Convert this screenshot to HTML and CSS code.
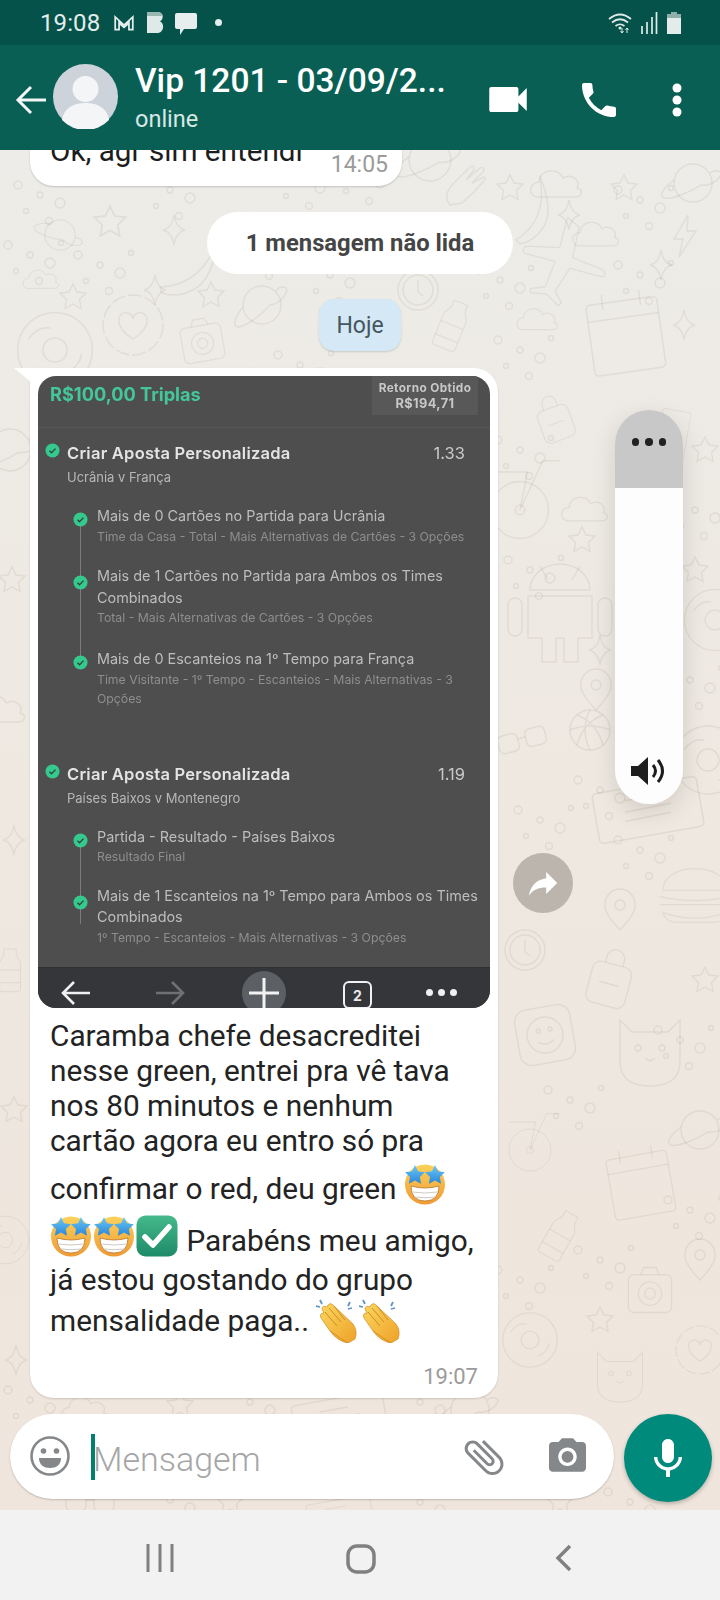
FILE: index.html
```html
<!DOCTYPE html>
<html lang="pt-BR">
<head>
<meta charset="utf-8">
<title>Vip 1201</title>
<link rel="stylesheet" href="styles.css">
</head>
<body>
<svg class="defs" width="0" height="0" aria-hidden="true">
  <defs>
    <linearGradient id="face" x1="0" y1="0" x2="0" y2="1"><stop offset="0" stop-color="#fbd25c"/><stop offset="1" stop-color="#ef9a33"/></linearGradient>
    <linearGradient id="star" x1="0" y1="0" x2="0" y2="1"><stop offset="0" stop-color="#6ac8f7"/><stop offset="1" stop-color="#2a86d8"/></linearGradient>
    <linearGradient id="gbox" x1="0" y1="0" x2="0" y2="1"><stop offset="0" stop-color="#45b98c"/><stop offset="1" stop-color="#1f8a68"/></linearGradient>
    <linearGradient id="hand" x1="0" y1="0" x2="1" y2="1"><stop offset="0" stop-color="#fbd75f"/><stop offset="1" stop-color="#eea128"/></linearGradient>
    <symbol id="starstruck" viewBox="0 0 42 42">
      <circle cx="21" cy="21.500" r="20" fill="url(#face)"/>
      <path d="M7 23q14 4 28 0q0 15-14 15T7 23z" fill="#fff" stroke="#b8742a" stroke-width=".8"/>
      <path d="M8 29q13 2 26 0M11 34q10 1.500 20 0" fill="none" stroke="#cfcac2" stroke-width="1"/>
      <path d="M11 2l3 6.200 6.800 1-4.900 4.800 1.100 6.800L11 17.600 4.900 20.800 6 14 1.100 9.200l6.900-1z" fill="url(#star)"/>
      <path d="M31 2l3 6.200 6.800 1-4.900 4.800 1.100 6.800L31 17.600l-6.100 3.200L26 14l-4.900-4.800 6.900-1z" fill="url(#star)"/>
    </symbol>
    <symbol id="clap" viewBox="0 0 44 44">
      <path d="M4 1l2 4M0 7l4 1M34 3l-2 4M36 9l-4 1" stroke="#5f93c9" stroke-width="1.800" fill="none"/>
      <path d="M18 7l19 18q5 7 2 15l-7 4q-11-2-18-12L5 19q-2-5 3-5l-2-4q0-4 5-2l1-2q3-3 6 1z" fill="url(#hand)" stroke="#d08d22" stroke-width=".7"/>
      <path d="M9 13l12 14M13 9l12 14M18 7l11 14M14 32q8 6 18 12" fill="none" stroke="#d08d22" stroke-width="1"/>
    </symbol>
    <symbol id="okbox" viewBox="0 0 42 42">
      <rect width="41" height="41" x=".5" y=".5" rx="9" fill="url(#gbox)"/>
      <path d="M9 22l8 8L33 12" fill="none" stroke="#fff" stroke-width="5.500" stroke-linecap="round" stroke-linejoin="round"/>
    </symbol>
    <symbol id="tick" viewBox="0 0 16 16">
      <circle cx="8" cy="8" r="7.500" fill="#35c98e"/>
      <path d="M4.800 8.200l2.200 2.200 4.200-4.400" fill="none" stroke="#2c4a40" stroke-width="1.500"/>
    </symbol>
    <g id="d-star"><path d="M0-13l4 8 9 1-6.500 6.500 1.500 9-8-4.500-8 4.500 1.500-9L-13-4l9-1z"/></g>
    <g id="d-spark"><path d="M0-15q2 13 11 15-9 2-11 15-2-13-11-15 9-2 11-15z"/></g>
    <g id="d-planet"><circle r="19"/><path d="M-19-3c-12 9-15 16-10 18 6 2 25-5 37-13C20 4 31-8 27-11c-3-2-7-1-10 1"/></g>
    <g id="d-cloud"><path d="M-24 12c-10 0-10-14 1-15 0-13 20-15 24-4 9-5 18 3 14 10 7 2 5 9-2 9z"/></g>
    <g id="d-heart"><circle r="30" stroke-dasharray="14 3"/><path d="M0 14C-22 0-14-15-5-12c3 1 5 3 5 6 0-3 2-5 5-6 9-3 17 12-5 26z"/></g>
    <g id="d-camera"><rect x="-24" y="-17" width="48" height="42" rx="6"/><path d="M-10-17l3-8h14l3 8"/><circle cy="4" r="13"/><circle cy="4" r="6"/></g>
    <g id="d-bottle"><path d="M-9-30h18v9l6 10v38q0 4-4 4h-22q-4 0-4-4v-38l6-10z"/><path d="M-15 0h30M-15 18h30"/></g>
    <g id="d-cal"><rect x="-34" y="-28" width="68" height="68" rx="4"/><path d="M-34-12h68M-18-36v14M18-36v14"/></g>
    <g id="d-plane"><path d="M-6-50l8 34 36-2c6 2 6 7 0 8L4-4l-4 30 12 9-2 4-18-6-16 6-2-4 14-9-2-30-34 6c-5-1-5-5-2-8l34-14-6-34z"/></g>
    <g id="d-android"><path d="M-30-20a30 26 0 0 1 60 0zM-32-14h64v42h-14v24h-14V28h-8v24h-14V28h-14z"/><path d="M-20-44l8 14M20-44l-8 14"/><rect x="-52" y="-12" width="14" height="38" rx="7"/><rect x="38" y="-12" width="14" height="38" rx="7"/></g>
    <g id="d-burger"><path d="M-40-6c0-36 80-36 80 0zM-44 2q44 10 88 0M-44 12h88M-40 22q40 14 80 0q-2 10-14 12h-52q-12-2-14-12z"/></g>
    <g id="d-donut"><circle r="34"/><circle r="11"/><path d="M-24-10q8-12 20-10M10 20q12-4 14-16"/></g>
    <g id="d-card"><rect x="-46" y="-22" width="92" height="44" rx="4" transform="rotate(-10)"/><path d="M-20 2l40-8M-20-8l28-5M-20 10l40-8"/></g>
    <g id="d-ball"><circle r="20"/><path d="M-20 0q20-8 40 0M0-20q-10 20 0 40M-13-15q20 8 26 30M13-15q-20 8-26 30"/></g>
    <g id="d-bike"><circle r="30"/><circle r="5"/><path d="M0 0L24-52h18M-30-40h38L0 0"/></g>
    <g id="d-hand"><path d="M-14 22q-8-10 4-22l16-16q5-3 4 3l-8 10 14-12q4-2 4 3l-12 12 12-6q3 1 0 4-10 12-22 22z"/></g>
    <g id="d-banana"><path d="M-12 30Q20 10 12-34q12 30 6 46-8 18-26 22z"/></g>
    <g id="d-bolt"><path d="M4-20L-10 4h9l-4 18L12-4H3z"/></g>
    <g id="d-clock"><circle r="20"/><circle r="15"/><path d="M0-10v12l5 4"/></g>
    <g id="d-pin"><path d="M0 20Q-17 2-15-6a15 15 0 0 1 30 0Q17 2 0 20z"/><circle cy="-5" r="5"/></g>
    <g id="d-glasses"><rect x="-24" y="-9" width="20" height="18" rx="5"/><rect x="4" y="-9" width="20" height="18" rx="5"/><path d="M-4-2h8"/></g>
    <g id="d-cat"><path d="M-30-30l12 12h36l12-12v44q-2 22-30 22t-30-22z"/><circle cx="-12" cy="-2" r="3"/><circle cx="12" cy="-2" r="3"/><path d="M-5 8q5 5 10 0"/></g>
    <g id="d-bag"><rect x="-20" y="-16" width="40" height="42" rx="8"/><path d="M-9-16v-6a9 9 0 0 1 18 0v6M-10 4h20"/></g>
    <g id="d-face"><rect x="-28" y="-28" width="56" height="56" rx="12"/><circle r="18"/><circle cx="-6" cy="-5" r="2"/><circle cx="6" cy="-5" r="2"/><path d="M-8 6q8 6 16 0"/></g>
    <g id="d-dots"><circle r="3"/><circle cx="20" cy="8" r="5"/><circle cx="-14" cy="16" r="2.500"/><circle cx="9" cy="26" r="3.500"/><circle cx="-22" cy="-10" r="4"/><circle cx="31" cy="-12" r="2.500"/></g>
  </defs>
</svg>

<div class="screen">
  <header class="topbar">
    <div class="status">
      <span class="clock">19:08</span>
      <svg class="st st-m" viewBox="0 0 20 16"><path d="M2 14V2.500L10 10l8-7.500V14h-3.500V8L10 12 5.500 8v6z" fill="none" stroke="#e3eeec" stroke-width="1.600"/></svg>
      <svg class="st st-b" viewBox="0 0 18 21"><path d="M1 0h10c7 0 7 7 3 9.500 5 2 4 11.500-3 11.500H1z" fill="#dfeae8"/><path d="M1 0h10c4 0 5.500 2 5.800 4H1z" fill="#9ab8b2"/></svg>
      <svg class="st st-c" viewBox="0 0 22 22"><path d="M2 0h18q2 0 2 2v12q0 2-2 2H9l-4 6v-6H2q-2 0-2-2V2q0-2 2-2z" fill="#e6efed"/></svg>
      <span class="dot"></span>
      <span class="spacer"></span>
      <svg class="st st-w" viewBox="0 0 24 20"><g fill="none" stroke="#dfeae8" stroke-width="1.700"><path d="M1 6q11-9 22 0M4 9.500q8-6.500 16 0M7.500 13q4.500-3.500 9 0"/></g><circle cx="12" cy="15" r="1.500" fill="#dfeae8"/><path d="M14 15v5M12.500 18l1.500 2 1.500-2M19 20v-5M17.500 17l1.500-2 1.500 2" stroke="#dfeae8" fill="none"/></svg>
      <svg class="st st-s" viewBox="0 0 18 22"><path d="M2 14v8M7 10v12M12 5v17M16.500 0v22" stroke="#dfeae8" stroke-width="1.700"/></svg>
      <svg class="st st-bat" viewBox="0 0 14 22"><path d="M4 0h6v2h4v20H0V2h4z" fill="#e3ecea"/><path d="M4 0h6v2h4v4H0V2h4z" fill="#8fb0aa"/></svg>
    </div>
    <div class="appbar">
      <svg class="back" viewBox="0 0 32 30"><path d="M31 15H3M16 2L3 15l13 13" fill="none" stroke="#f2f7f6" stroke-width="3"/></svg>
      <svg class="avatar" viewBox="0 0 65 65"><circle cx="32.500" cy="32.500" r="32.500" fill="#cdd3da"/><circle cx="32.500" cy="25" r="13" fill="#f4f5f6"/><path d="M9 56c2-13 13-17 23.500-17S54 43 56 56a32.500 32.500 0 0 1-47 0z" fill="#f4f5f6"/></svg>
      <div class="who">
        <div class="name">Vip 1201 - 03/09/2...</div>
        <div class="online">online</div>
      </div>
      <svg class="act-video" viewBox="3 6 18 12"><path d="M17 10.500V7c0-.55-.45-1-1-1H4c-.55 0-1 .45-1 1v10c0 .55.45 1 1 1h12c.55 0 1-.45 1-1v-3.500l4 4v-11l-4 4z" fill="#fff"/></svg>
      <svg class="act-phone" viewBox="3 3 18 18"><path d="M6.620 10.790c1.440 2.830 3.760 5.140 6.590 6.590l2.200-2.200c.27-.27.67-.36 1.020-.24 1.120.37 2.330.57 3.570.57.55 0 1 .45 1 1V20c0 .55-.45 1-1 1-9.390 0-17-7.610-17-17 0-.55.45-1 1-1h3.500c.55 0 1 .45 1 1 0 1.250.2 2.450.57 3.570.11.35.03.74-.25 1.020l-2.200 2.200z" fill="#fff"/></svg>
      <svg class="act-more" viewBox="0 0 10 34"><circle cx="5" cy="5" r="4.500" fill="#fff"/><circle cx="5" cy="17" r="4.500" fill="#fff"/><circle cx="5" cy="29" r="4.500" fill="#fff"/></svg>
    </div>
  </header>

  <main class="chat">
    <svg class="wall" width="720" height="1360" viewBox="0 0 720 1360" aria-hidden="true">
      <g fill="none" stroke="#6b5f4e" stroke-opacity=".1" stroke-width="1.400">
        <use href="#d-planet" transform="translate(693 33)"/><use href="#d-hand" transform="translate(464 33)"/><use href="#d-star" transform="translate(510 38)"/><use href="#d-cloud" transform="translate(562 35)"/><use href="#d-star" transform="translate(624 38)"/>
        <use href="#d-planet" transform="translate(430 10) scale(1.100)"/>
        <use href="#d-banana" transform="translate(528 60)"/><use href="#d-cloud" transform="translate(601 85) scale(.9)"/><use href="#d-spark" transform="translate(569 65)"/><use href="#d-bolt" transform="translate(684 85)"/>
        <use href="#d-star" transform="translate(110 72) scale(1.200)"/><use href="#d-spark" transform="translate(174 80)"/><use href="#d-planet" transform="translate(60 85) scale(.8) rotate(40)"/>
        <use href="#d-spark" transform="translate(155 140)"/><use href="#d-banana" transform="translate(188 115) rotate(30) scale(1.100)"/>
        <use href="#d-plane" transform="translate(565 120) rotate(25) scale(.9)"/><use href="#d-spark" transform="translate(661 115)"/>
        <use href="#d-cal" transform="translate(625 180) rotate(-8) scale(1.050)"/><use href="#d-clock" transform="translate(418 140)"/><use href="#d-bottle" transform="translate(452 175) rotate(22) scale(.8)"/>
        <use href="#d-camera" transform="translate(202 190) rotate(-10) scale(.85)"/><use href="#d-heart" transform="translate(133 175)"/><use href="#d-planet" transform="translate(262 155) rotate(-15)"/><use href="#d-star" transform="translate(211 145)"/><use href="#d-star" transform="translate(73 147)"/><use href="#d-cloud" transform="translate(542 170) scale(.8)"/><use href="#d-spark" transform="translate(684 175)"/><use href="#d-cloud" transform="translate(45 130) scale(.7)"/>
        <use href="#d-donut" transform="translate(55 200) scale(1.100)"/>
        <use href="#d-dots" transform="translate(40 45)"/><use href="#d-dots" transform="translate(170 40)"/><use href="#d-dots" transform="translate(300 30)"/><use href="#d-dots" transform="translate(360 25)"/><use href="#d-dots" transform="translate(640 50)"/><use href="#d-dots" transform="translate(500 130)"/><use href="#d-dots" transform="translate(640 125)"/><use href="#d-dots" transform="translate(30 105)"/><use href="#d-dots" transform="translate(100 115)"/><use href="#d-dots" transform="translate(260 100)"/><use href="#d-dots" transform="translate(330 125)"/><use href="#d-dots" transform="translate(470 90)"/><use href="#d-dots" transform="translate(300 215)"/><use href="#d-dots" transform="translate(520 200)"/>
        <use href="#d-bag" transform="translate(555 270) rotate(-20) scale(.8)"/><use href="#d-card" transform="translate(672 290) rotate(-70) scale(.65)"/><use href="#d-star" transform="translate(705 300)"/>
        <use href="#d-bike" transform="translate(520 360) scale(.95)"/><use href="#d-cloud" transform="translate(590 360) scale(.9)"/><use href="#d-star" transform="translate(582 390)"/>
        <use href="#d-android" transform="translate(560 460)"/><use href="#d-spark" transform="translate(600 500)"/><use href="#d-pin" transform="translate(596 540)"/><use href="#d-star" transform="translate(695 420)"/><use href="#d-donut" transform="translate(715 470) scale(.9)"/>
        <use href="#d-glasses" transform="translate(522 590) rotate(-15)"/><use href="#d-ball" transform="translate(590 580)"/><use href="#d-donut" transform="translate(708 610)"/><use href="#d-card" transform="translate(648 660) scale(1.150)"/>
        <use href="#d-burger" transform="translate(695 745) scale(.8)"/><use href="#d-pin" transform="translate(620 760)"/>
        <use href="#d-dots" transform="translate(520 300)"/><use href="#d-dots" transform="translate(695 360)"/><use href="#d-dots" transform="translate(530 420)"/><use href="#d-dots" transform="translate(600 640)"/><use href="#d-dots" transform="translate(540 670)"/><use href="#d-dots" transform="translate(690 530)"/><use href="#d-dots" transform="translate(640 700)"/>
        <use href="#d-bag" transform="translate(610 830) rotate(15)"/><use href="#d-face" transform="translate(545 885) rotate(-10)"/><use href="#d-cat" transform="translate(650 900)"/><use href="#d-star" transform="translate(705 830)"/><use href="#d-clock" transform="translate(525 800)"/>
        <use href="#d-bike" transform="translate(530 1000) scale(.7)"/><use href="#d-cal" transform="translate(640 1030) rotate(-10) scale(.9)"/><use href="#d-planet" transform="translate(700 980)"/><use href="#d-bottle" transform="translate(560 1085) rotate(30) scale(.8)"/>
        <use href="#d-camera" transform="translate(650 1140) scale(.9)"/><use href="#d-star" transform="translate(600 1170)"/><use href="#d-donut" transform="translate(530 1190) scale(.8)"/><use href="#d-cat" transform="translate(620 1225) scale(.75)"/><use href="#d-pin" transform="translate(700 1110)"/><use href="#d-heart" transform="translate(700 1200) scale(.8)"/>
        <use href="#d-dots" transform="translate(570 950)"/><use href="#d-dots" transform="translate(680 890)"/><use href="#d-dots" transform="translate(520 1130)"/><use href="#d-dots" transform="translate(600 1110)"/><use href="#d-dots" transform="translate(690 1060)"/>
        <use href="#d-planet" transform="translate(10 300) scale(1.100)"/><use href="#d-star" transform="translate(12 430)"/><use href="#d-cloud" transform="translate(5 560)"/><use href="#d-spark" transform="translate(14 690)"/><use href="#d-bottle" transform="translate(10 820) scale(.7)"/><use href="#d-star" transform="translate(14 960)"/><use href="#d-donut" transform="translate(5 1090) scale(.7)"/><use href="#d-spark" transform="translate(16 1210)"/>
        <use href="#d-cloud" transform="translate(90 1260) scale(.9)"/><use href="#d-star" transform="translate(180 1255)"/><use href="#d-card" transform="translate(340 1270)"/><use href="#d-planet" transform="translate(470 1260)"/><use href="#d-dots" transform="translate(250 1252)"/><use href="#d-dots" transform="translate(420 1252)"/><use href="#d-dots" transform="translate(30 1250)"/>
        <use href="#d-glasses" transform="translate(90 1352)"/><use href="#d-star" transform="translate(230 1352)"/><use href="#d-card" transform="translate(340 1365) scale(.7)"/><use href="#d-dots" transform="translate(170 1350)"/><use href="#d-dots" transform="translate(420 1352)"/><use href="#d-star" transform="translate(560 1352)"/><use href="#d-dots" transform="translate(630 1352)"/>
      </g>
    </svg>

    <section class="messages">
      <div class="bubble-old">
        <span class="old-text">Ok, agr sim entendi</span>
        <span class="old-time">14:05</span>
      </div>
      <div class="unread">1 mensagem não lida</div>
      <div class="day">Hoje</div>

      <article class="bubble">
        <div class="shot">
          <div class="shot-body">
            <div class="shot-head">
              <span class="stake">R$100,00 Triplas</span>
              <div class="ret"><span>Retorno Obtido</span><span>R$194,71</span></div>
            </div>

            <div class="bet bet-one">
              <svg class="tick tick-main"><use href="#tick"/></svg>
              <div class="bet-row"><span class="bet-title">Criar Aposta Personalizada</span><span class="odd">1.33</span></div>
              <div class="match">Ucrânia v França</div>
              <div class="legs">
                <div class="leg leg-a"><svg class="tick"><use href="#tick"/></svg><div class="leg-t">Mais de 0 Cartões no Partida para Ucrânia</div><div class="leg-s">Time da Casa - Total - Mais Alternativas de Cartões - 3 Opções</div></div>
                <div class="leg leg-b"><svg class="tick"><use href="#tick"/></svg><div class="leg-t">Mais de 1 Cartões no Partida para Ambos os Times Combinados</div><div class="leg-s">Total - Mais Alternativas de Cartões - 3 Opções</div></div>
                <div class="leg"><svg class="tick"><use href="#tick"/></svg><div class="leg-t">Mais de 0 Escanteios na 1º Tempo para França</div><div class="leg-s leg-wrap">Time Visitante - 1º Tempo - Escanteios - Mais Alternativas - 3 Opções</div></div>
              </div>
            </div>

            <div class="bet bet-two">
              <svg class="tick tick-main"><use href="#tick"/></svg>
              <div class="bet-row"><span class="bet-title">Criar Aposta Personalizada</span><span class="odd">1.19</span></div>
              <div class="match">Países Baixos v Montenegro</div>
              <div class="legs">
                <div class="leg leg-e"><svg class="tick"><use href="#tick"/></svg><div class="leg-t">Partida - Resultado - Países Baixos</div><div class="leg-s">Resultado Final</div></div>
                <div class="leg leg-b"><svg class="tick"><use href="#tick"/></svg><div class="leg-t">Mais de 1 Escanteios na 1º Tempo para Ambos os Times Combinados</div><div class="leg-s">1º Tempo - Escanteios - Mais Alternativas - 3 Opções</div></div>
              </div>
            </div>
          </div>
          <div class="shot-bar">
            <svg class="nav-arrow" viewBox="0 0 30 26"><path d="M29 13H2M13 2L2 13l11 11" fill="none" stroke="#f0f0f0" stroke-width="2.600"/></svg>
            <svg class="nav-arrow" viewBox="0 0 30 26"><path d="M1 13h27M17 2l11 11-11 11" fill="none" stroke="#6f7073" stroke-width="2.600"/></svg>
            <span class="plus"><svg viewBox="0 0 44 44"><path d="M7 22h30M22 7v30" stroke="#f2f2f2" stroke-width="3"/></svg></span>
            <span class="tabs">2</span>
            <span class="more"><i></i><i></i><i></i></span>
          </div>
        </div>
        <p class="body-text">Caramba chefe desacreditei nesse green, entrei pra vê tava nos 80 minutos e nenhum cartão agora eu entro só pra confirmar o red, deu green <svg class="emoji"><use href="#starstruck"/></svg> <svg class="emoji e-tight"><use href="#starstruck"/></svg><svg class="emoji e-tight"><use href="#starstruck"/></svg><svg class="emoji e-tight"><use href="#okbox"/></svg> Parabéns meu amigo, já estou gostando do grupo mensalidade paga.. <svg class="emoji e-clap"><use href="#clap"/></svg><svg class="emoji e-clap"><use href="#clap"/></svg></p>
        <div class="body-time">19:07</div>
      </article>
    </section>

    <div class="forward"><svg viewBox="0 0 24 24"><path d="M14 9V5l7 7-7 7v-4.100c-5 0-8.500 1.600-11 5.100 1-5 4-10 11-11z" fill="#fff"/></svg></div>

    <aside class="volume">
      <div class="vol-top"><i></i><i></i><i></i></div>
      <div class="vol-track">
        <svg class="vol-icon" viewBox="0 0 36 28"><path d="M0 9v10h7l10 9V0L7 9z" fill="#1d1d1d"/><path d="M22 8q5 6 0 12M27 3q9 11 0 22" fill="none" stroke="#1d1d1d" stroke-width="3"/></svg>
      </div>
    </aside>

    <footer class="composer">
      <div class="input">
        <svg class="i-smile" viewBox="0 0 40 40"><circle cx="20" cy="20" r="18.500" fill="none" stroke="#85888b" stroke-width="2.600"/><circle cx="13.500" cy="15" r="2.800" fill="#85888b"/><circle cx="26.500" cy="15" r="2.800" fill="#85888b"/><path d="M9 22h22c0 7-5 10-11 10S9 29 9 22z" fill="#85888b"/></svg>
        <span class="caret"></span>
        <span class="placeholder">Mensagem</span>
        <svg class="i-clip" viewBox="0 0 24 24"><path transform="rotate(-45 12 12)" d="M16.500 6v11.500c0 2.210-1.790 4-4 4s-4-1.790-4-4V5c0-1.380 1.120-2.500 2.500-2.500s2.500 1.120 2.500 2.500v10.500c0 .55-.45 1-1 1s-1-.45-1-1V6H10v9.500c0 1.380 1.120 2.500 2.500 2.500s2.500-1.120 2.500-2.500V5c0-2.210-1.790-4-4-4S7 2.790 7 5v12.500c0 3.040 2.460 5.500 5.500 5.500s5.500-2.460 5.500-5.500V6h-1.500z" fill="#85888b"/></svg>
        <svg class="i-cam" viewBox="2 2 20 18"><path d="M9 2L7.170 4H4c-1.100 0-2 .9-2 2v12c0 1.100.9 2 2 2h16c1.100 0 2-.9 2-2V6c0-1.100-.9-2-2-2h-3.170L15 2H9zm3 15c-2.760 0-5-2.240-5-5s2.240-5 5-5 5 2.240 5 5-2.240 5-5 5z" fill="#85888b"/><circle cx="12" cy="12" r="3.200" fill="#85888b"/></svg>
      </div>
      <button class="mic" type="button" aria-label="Gravar"><svg viewBox="5 2 14 19"><path d="M12 14c1.660 0 3-1.340 3-3V5c0-1.660-1.340-3-3-3S9 3.340 9 5v6c0 1.660 1.340 3 3 3zm5.300-3c0 3-2.540 5.100-5.300 5.100S6.700 14 6.700 11H5c0 3.410 2.720 6.230 6 6.720V21h2v-3.280c3.280-.48 6-3.300 6-6.720h-1.700z" fill="#fff"/></svg></button>
    </footer>
  </main>

  <nav class="navbar">
    <svg class="nb-recent" viewBox="0 0 28 28"><path d="M2 0v28M14 0v28M26 0v28" stroke="#808080" stroke-width="3"/></svg>
    <svg class="nb-home" viewBox="0 0 30 30"><rect x="2" y="2" width="26" height="26" rx="9" fill="none" stroke="#808080" stroke-width="3.500"/></svg>
    <svg class="nb-back" viewBox="0 0 18 28"><path d="M15 2L3 14l12 12" fill="none" stroke="#808080" stroke-width="3.500"/></svg>
  </nav>
</div>
</body>
</html>
```

FILE: styles.css
```css
* { box-sizing: border-box; }
html, body { margin: 0; padding: 0; }
body { width: 720px; height: 1600px; overflow: hidden; font-family: Roboto, "Liberation Sans", sans-serif; }
.defs { position: absolute; }
.screen { width: 720px; height: 1600px; display: flex; flex-direction: column; }

/* top */
.topbar { flex: none; }
.status { height: 45px; background: #05524a; display: flex; align-items: center; padding: 0 39px 0 40px; color: #e3eeec; }
.clock { font-size: 24px; letter-spacing: .1px; margin-right: 13px; }
.st { display: block; flex: none; }
.st-m { width: 22px; height: 18px; margin-right: 11px; }
.st-b { width: 18px; height: 21px; margin-right: 11px; }
.st-c { width: 22px; height: 22px; margin: 2px 0 0; }
.dot { width: 7px; height: 7px; border-radius: 50%; background: #e3eeec; margin-left: 18px; }
.spacer { flex: 1; }
.st-w { width: 24px; height: 20px; margin-right: 8px; }
.st-s { width: 18px; height: 22px; margin-right: 9px; }
.st-bat { width: 14px; height: 22px; }

.appbar { height: 105px; background: #0a5f55; display: flex; align-items: center; padding-left: 15px; color: #fff; }
.back { width: 32px; height: 30px; flex: none; margin-top: 4px; }
.avatar { width: 65px; height: 65px; flex: none; margin: -2px 0 0 6px; }
.who { margin-left: 17px; width: 338px; flex: none; }
.name { font-size: 33.500px; font-weight: 500; line-height: 36px; white-space: nowrap; margin-top: 0; }
.online { font-size: 23.500px; line-height: 28px; margin-top: 6px; color: #d8e8e5; }
.act-video { width: 38px; height: 25px; flex: none; margin: 4px 0 0 16px; }
.act-phone { width: 34px; height: 34px; flex: none; margin: 4px 0 0 55px; }
.act-more { width: 10px; height: 34px; flex: none; margin: 4px 0 0 56px; }

/* chat */
.chat { flex: 1; min-height: 0; position: relative; display: flex; flex-direction: column; background: linear-gradient(#edece8, #eee8e0 50%, #efe5dc); overflow: hidden; }
.wall { position: absolute; left: 0; top: 0; }
.messages { flex: 1; min-height: 0; position: relative; }

.bubble-old { width: 372px; height: 48px; margin: -12px 0 0 30px; background: #fff; border-radius: 0 0 24px 24px; box-shadow: 0 1px 2px rgba(0,0,0,.18); display: flex; justify-content: space-between; padding: 0 14px 0 20px; }
.old-text { font-size: 29.700px; line-height: 32px; margin-top: -3px; color: #1d1d1d; }
.old-time { font-size: 23px; color: #9b9b9b; margin-top: 14px; line-height: 26px; }

.unread { width: 306px; height: 62px; margin: 26px auto 0 207px; background: #fff; border-radius: 31px; font-size: 23.800px; font-weight: 700; color: #454545; display: flex; align-items: center; justify-content: center; }
.day { width: 82px; height: 52px; margin: 25px 0 0 319px; background: #d4e9f5; border-radius: 15px; font-size: 23px; color: #46565f; display: flex; align-items: center; justify-content: center; box-shadow: 0 1px 2px rgba(0,0,0,.15); }

.bubble { position: relative; width: 468px; margin: 17px 0 0 30px; background: #fff; border-radius: 0 24px 24px 24px; padding: 8px 8px 0; box-shadow: 0 1px 2px rgba(0,0,0,.15); }
.bubble::before { content: ""; position: absolute; left: -16px; top: 0; width: 24px; height: 20px; background: #fff; clip-path: polygon(0 0, 100% 0, 100% 100%); }

.shot { height: 632px; border-radius: 18px; overflow: hidden; background: #4e4e4e; display: flex; flex-direction: column; font-family: Inter, "Liberation Sans", sans-serif; }
.shot-body { flex: 1; min-height: 0; position: relative; filter: blur(.35px); }
.shot-head { height: 52px; border-bottom: 1px solid #585858; padding: 0 12px; display: flex; justify-content: space-between; }
.stake { font-size: 18.200px; font-weight: 700; color: #43c79a; line-height: 36px; }
.ret { width: 106px; height: 39px; background: #585858; display: flex; flex-direction: column; align-items: center; justify-content: center; font-size: 11.800px; font-weight: 700; letter-spacing: .4px; line-height: 15px; color: #c8c8c8; }
.ret span:last-child { font-size: 12.800px; }

.bet { position: relative; padding-left: 29px; }
.bet-one { padding-top: 15px; }
.bet-two { margin-top: 56px; }
.tick { width: 15px; height: 15px; display: block; position: absolute; }
.tick-main { left: 7px; top: 14.500px; }
.bet-two .tick-main { top: .5px; }
.bet-row { display: flex; justify-content: space-between; padding-right: 25px; }
.bet-title { font-size: 16.500px; font-weight: 600; letter-spacing: .25px; color: #e4e4e4; line-height: 20px; }
.odd { font-size: 16.500px; color: #c9c9c9; line-height: 20px; }
.match { font-size: 13px; line-height: 16px; margin-top: 6px; color: #b7b7b7; }

.legs { position: relative; margin: 20px 0 0 30px; width: 383px; }
.legs::before { content: ""; position: absolute; left: -17.500px; top: 15px; bottom: 44px; width: 1px; background: #7b7b7b; }
.leg { position: relative; }
.leg .tick { left: -24.500px; top: 7px; }
.leg-a { height: 60px; }
.leg-e { height: 59px; }
.leg-b { height: 83px; }
.leg-b .tick { top: 10px; }
.leg-t { font-size: 14.400px; line-height: 21.500px; color: #bdbdbd; }
.leg-s { font-size: 12.250px; line-height: 19px; color: #8e8e8e; }
.leg-wrap { width: 370px; }

.shot-bar { flex: none; height: 41px; background: #35363a; border-top: 1px solid #2f3033; display: flex; position: relative; overflow: hidden; }
.nav-arrow { width: 30px; height: 26px; position: absolute; top: 12px; left: 23px; }
.nav-arrow + .nav-arrow { left: 117px; }
.plus { position: absolute; left: 204px; top: 3px; width: 44px; height: 44px; border-radius: 50%; background: #5c6065; display: block; }
.plus svg { display: block; width: 44px; height: 44px; }
.tabs { position: absolute; left: 305px; top: 13px; width: 29px; height: 28px; border: 2.500px solid #f0f0f0; border-radius: 6px; color: #e8e8e8; font-size: 14px; font-weight: 700; display: flex; align-items: center; justify-content: center; }
.more { position: absolute; left: 388px; top: 21px; display: flex; gap: 5px; }
.more i { width: 7px; height: 7px; border-radius: 50%; background: #f0f0f0; display: block; }

.body-text { margin: 10px 0 0; padding: 0 8px 0 12px; font-size: 29.800px; line-height: 35px; color: #232323; }
.emoji { width: 42px; height: 42px; vertical-align: -11px; margin-top: 5px; margin-bottom: 5px; }
.e-tight { margin-right: 1px; }
.e-clap { width: 44px; height: 44px; vertical-align: -12px; margin: 2px -1px 0 0; }
.body-time { text-align: right; font-size: 22px; color: #9b9b9b; line-height: 26px; padding: 21px 12px 8px 0; }

/* overlays */
.forward { position: absolute; left: 513px; top: 703px; width: 60px; height: 60px; border-radius: 50%; background: rgba(120,110,105,.42); display: flex; align-items: center; justify-content: center; }
.forward svg { width: 38px; height: 38px; }
.volume { position: absolute; left: 615px; top: 260px; width: 68px; height: 394px; border-radius: 34px; overflow: hidden; box-shadow: 0 8px 24px rgba(0,0,0,.12); display: flex; flex-direction: column; }
.vol-top { height: 78px; background: #c8c8c8; display: flex; gap: 6px; justify-content: center; padding-top: 28px; }
.vol-top i { width: 7.500px; height: 7.500px; border-radius: 50%; background: #222; display: block; }
.vol-track { flex: 1; background: #fdfdfd; display: flex; align-items: flex-end; justify-content: center; padding-bottom: 19px; }
.vol-icon { width: 36px; height: 28px; display: block; }

/* composer */
.composer { flex: none; height: 96px; position: relative; display: flex; gap: 10px; padding: 0 8px 0 10px; align-items: flex-start; }
.input { width: 604px; height: 85px; background: #fff; border-radius: 43px; box-shadow: 0 1px 2px rgba(0,0,0,.2); display: flex; align-items: center; padding-left: 20px; }
.i-smile { width: 40px; height: 40px; flex: none; margin-top: -1px; }
.caret { width: 4px; height: 46px; background: #00806f; margin-left: 21px; flex: none; }
.placeholder { font-size: 34px; color: #a6a6a6; margin-left: -2px; width: 364px; flex: none; font-weight: 300; margin-top: 4px; }
.i-clip { width: 48px; height: 48px; flex: none; margin-left: 3px; }
.i-cam { width: 37px; height: 34px; flex: none; margin: -3px 0 0 41px; }
.mic { width: 88px; height: 88px; border: 0; padding: 0; border-radius: 50%; background: #008a7c; box-shadow: 0 2px 4px rgba(0,0,0,.25); display: flex; align-items: center; justify-content: center; flex: none; }
.mic svg { width: 28px; height: 38px; }

/* nav */
.navbar { flex: none; height: 90px; background: #f2f2f2; position: relative; display: grid; grid-template-columns: 146px 28px 172px 30px 179px 18px; align-items: start; padding-top: 34px; }
.nb-recent { grid-column: 2; width: 28px; height: 28px; }
.nb-home { grid-column: 4; width: 30px; height: 30px; }
.nb-back { grid-column: 6; width: 18px; height: 28px; }
```
